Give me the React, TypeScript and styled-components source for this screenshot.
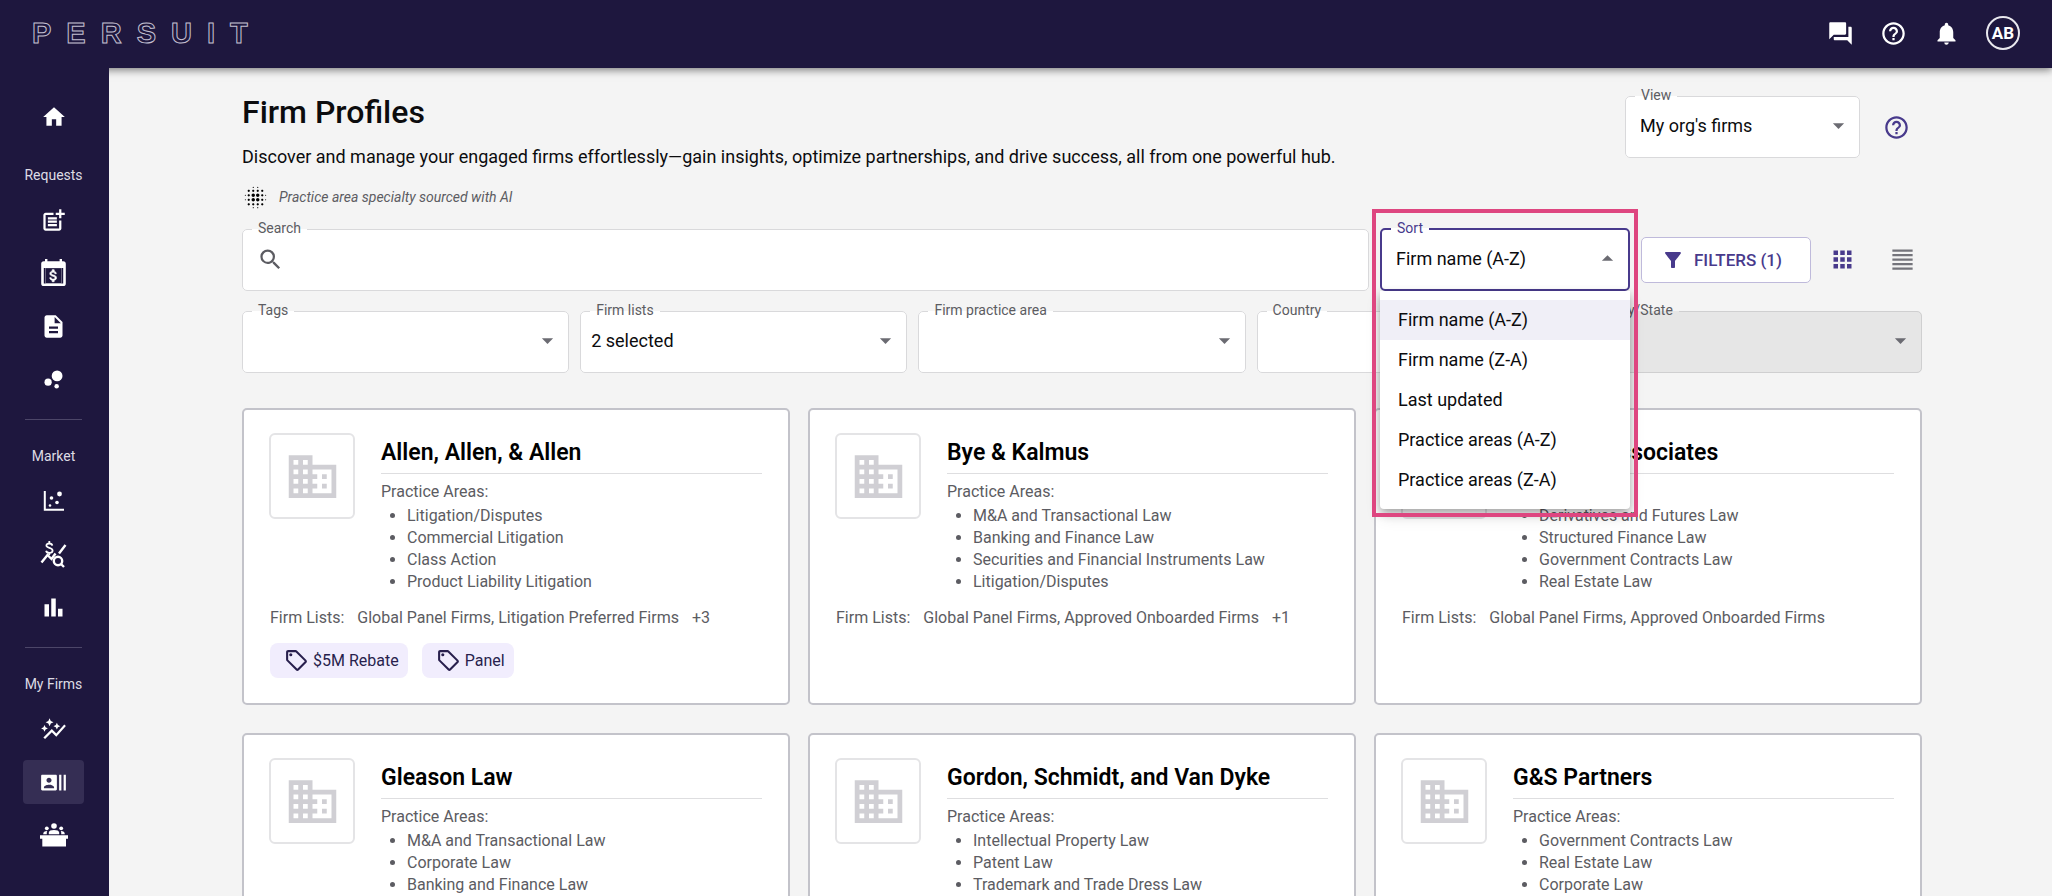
import React from 'react';
import styled, { createGlobalStyle, css } from 'styled-components';
import {
  MdApps,
  MdArrowDropDown,
  MdArrowDropUp,
  MdAttachMoney,
  MdAutoGraph,
  MdBarChart,
  MdBlurOn,
  MdBubbleChart,
  MdBusiness,
  MdDescription,
  MdFilterAlt,
  MdFormatAlignJustify,
  MdHelpOutline,
  MdHome,
  MdNotifications,
  MdOutlineSell,
  MdPostAdd,
  MdQuestionAnswer,
  MdRecentActors,
  MdSearch,
} from 'react-icons/md';

const color = {
  navy: '#1e173e',
  purple: '#483a8c',
  page: '#f4f4f4',
  text: '#0c0c0e',
  muted: '#5c5c62',
  line: '#d9d9db',
  cardLine: '#c3c3ca',
  pink: '#de4680',
};

const GlobalStyle = createGlobalStyle`
  *, *::before, *::after { box-sizing: border-box; }
  body {
    margin: 0;
    background: ${color.page};
    color: ${color.text};
    font-family: Roboto, "Liberation Sans", sans-serif;
    font-size: 18px;
  }
  button, input, select { font: inherit; color: inherit; }
`;

const Shell = styled.div`
  display: flex;
  flex-direction: column;
  height: 100vh;
  overflow: hidden;
`;

const TopBar = styled.header`
  display: flex;
  flex: none;
  align-items: center;
  justify-content: space-between;
  height: 68px;
  padding: 0 32px 2px;
  background: ${color.navy};
  box-shadow: 0 2px 8px rgba(0, 0, 0, 0.5);
  z-index: 1;
`;

const Logo = styled.a`
  display: flex;
  gap: 15px;
  font-family: "Liberation Sans", sans-serif;
  font-size: 29px;
  line-height: 32px;
  font-weight: 700;
  text-decoration: none;
  color: ${color.navy};
  -webkit-text-stroke: 1px #c4c0d2;
`;

const TopActions = styled.div`
  display: flex;
  align-items: center;
  gap: 26px;
  color: #fff;
`;

const IconButton = styled.button<{ $box?: number; $tone?: string }>`
  display: flex;
  align-items: center;
  justify-content: center;
  width: ${(p) => p.$box ?? 27}px;
  height: ${(p) => p.$box ?? 27}px;
  padding: 0;
  border: 0;
  background: none;
  color: ${(p) => p.$tone ?? 'inherit'};
  cursor: pointer;
`;

const Avatar = styled.button`
  width: 34px;
  height: 34px;
  padding: 0;
  border: 2px solid #e9e8ee;
  border-radius: 50%;
  background: none;
  color: #fff;
  font-size: 17px;
  line-height: 30px;
  font-weight: 700;
`;

const Body = styled.div`
  display: flex;
  flex: 1;
  min-height: 0;
`;

const SideNav = styled.nav`
  display: flex;
  flex: none;
  flex-direction: column;
  align-items: center;
  width: 109px;
  padding: 27px 2px 0 0;
  background: ${color.navy};
  color: #fff;
  z-index: 2;
`;

const NavGroup = styled.div`
  display: flex;
  flex-direction: column;
  align-items: center;
  gap: 9px;
`;

const NavLink = styled.a<{ $active?: boolean }>`
  display: flex;
  align-items: center;
  justify-content: center;
  width: 61px;
  height: 44px;
  border-radius: 4px;
  color: #fff;
  background: ${(p) => (p.$active ? '#352e54' : 'transparent')};
`;

const NavLabel = styled.div`
  margin: 26px 0 13px;
  font-size: 14px;
  line-height: 20px;
  color: #dddbe4;
`;

const NavRule = styled.hr`
  width: 57px;
  height: 1px;
  margin: 18px 0 0;
  border: 0;
  background: #4c4668;
`;

const Main = styled.main`
  flex: 1;
  min-width: 0;
  padding: 20px 130px 28px 133px;
  overflow-y: auto;
  scrollbar-width: none;
`;

const PageHead = styled.div`
  display: flex;
  justify-content: space-between;
  margin-bottom: 12px;
`;

const PageTitle = styled.h1`
  margin: 0 0 9px;
  font-size: 32px;
  line-height: 48px;
  font-weight: 500;
`;

const Lead = styled.p`
  margin: 0 0 16px;
  font-size: 18px;
  line-height: 24px;
`;

const AiNote = styled.div`
  display: flex;
  align-items: center;
  gap: 10px;
  height: 24px;
  font-size: 14px;
  line-height: 24px;
  font-style: italic;
  color: ${color.muted};

  svg { color: #000; }
`;

const ViewGroup = styled.div`
  display: flex;
  align-items: center;
  align-self: flex-start;
  gap: 16px;
  margin-right: 6px;

  > button { margin-top: 8px; }
`;

const FieldBox = styled.fieldset<{ $focused?: boolean; $disabled?: boolean; $width?: number }>`
  min-width: 0;
  width: ${(p) => (p.$width ? `${p.$width}px` : 'auto')};
  height: 70px;
  margin: 0;
  padding: 0;
  border: 1px solid ${color.line};
  border-radius: 5px;
  background: ${(p) => (p.$disabled ? '#e6e6e6' : '#fff')};
  ${(p) => p.$focused && css`border: 2px solid ${color.purple};`}
  ${(p) => p.$disabled && css`border-color: #cfcfd0;`}

  legend {
    height: 16px;
    margin-left: 9px;
    padding: 0 6px;
    font-size: 14px;
    line-height: 14px;
    color: ${(p) => (p.$focused ? color.purple : color.muted)};
  }
`;

const Control = styled.div`
  position: relative;
  height: 42px;

  > svg {
    position: absolute;
    top: 8px;
    right: 7px;
    color: #6b6b72;
    pointer-events: none;
  }
`;

const Select = styled.select<{ $inset: number }>`
  width: 100%;
  height: 42px;
  padding: 0 40px 0 ${(p) => p.$inset}px;
  border: 0;
  outline: 0;
  appearance: none;
  background: none;
  font-size: 18px;
  opacity: 1;
`;

const SearchControl = styled.div`
  display: flex;
  align-items: center;
  gap: 8px;
  height: 44px;
  padding: 0 14px;
  color: ${color.muted};
`;

const SearchInput = styled.input`
  flex: 1;
  min-width: 0;
  height: 32px;
  padding: 0;
  border: 0;
  outline: 0;
  background: none;
`;

const SearchRow = styled.div`
  display: grid;
  grid-template-columns: 1fr 250px auto;
  gap: 11px;
  margin-bottom: 12px;
`;

const SortWrap = styled.div`
  position: relative;
  z-index: 1;
`;

const Menu = styled.ul`
  position: absolute;
  top: 100%;
  left: 0;
  right: 0;
  margin: 0;
  padding: 9px 0;
  border-radius: 0 0 4px 4px;
  background: #fff;
  box-shadow: 0 4px 10px rgba(0, 0, 0, 0.3), 0 8px 16px rgba(0, 0, 0, 0.1);
  list-style: none;
`;

const MenuItem = styled.li<{ $selected: boolean }>`
  padding: 0 18px;
  font-size: 18px;
  line-height: 40px;
  background: ${(p) => (p.$selected ? '#f0eff7' : '#fff')};
`;

const Highlight = styled.div`
  position: absolute;
  top: -12px;
  left: -8px;
  right: -8px;
  height: 308px;
  border: 4px solid ${color.pink};
  pointer-events: none;
`;

const RowActions = styled.div`
  display: flex;
  align-items: center;
  padding-top: 7px;
`;

const FiltersButton = styled.button`
  display: flex;
  align-items: center;
  gap: 9px;
  width: 170px;
  height: 46px;
  margin-right: 11px;
  padding: 0 0 0 19px;
  border: 1px solid #bfbadb;
  border-radius: 5px;
  background: #fff;
  color: ${color.purple};
  font-size: 17px;
  font-weight: 500;
`;

const ViewToggle = styled.div`
  display: flex;
  gap: 20px;
`;

const FilterRow = styled.div`
  display: grid;
  grid-template-columns: repeat(5, 1fr);
  gap: 11px;
  margin-bottom: 35px;
`;

const CardGrid = styled.div`
  display: grid;
  grid-template-columns: repeat(3, 1fr);
  gap: 28px 18px;
`;

const Card = styled.article`
  min-height: 297px;
  padding: 23px 26px 22px 25px;
  border: 2px solid ${color.cardLine};
  border-radius: 5px;
  background: #fff;
  color: ${color.muted};
  font-size: 16px;
  line-height: 22px;
`;

const CardTop = styled.div`
  display: grid;
  grid-template-columns: 86px 1fr;
  column-gap: 26px;
`;

const FirmLogo = styled.div`
  display: flex;
  align-items: center;
  justify-content: center;
  height: 86px;
  border: 2px solid #e4e4e6;
  border-radius: 6px;
  color: #d0cfd4;
`;

const FirmName = styled.h2`
  margin: 0 0 7px;
  padding: 5px 0 5px;
  border-bottom: 1px solid #dedee0;
  color: #000;
  font-size: 23px;
  line-height: 30px;
  font-weight: 600;
  white-space: nowrap;
`;

const AreaList = styled.ul`
  margin: 2px 0 0;
  padding-left: 26px;
`;

const FirmLists = styled.div`
  display: flex;
  gap: 13px;
  margin-top: 14px;
  padding-left: 1px;
`;

const Chips = styled.div`
  display: flex;
  gap: 14px;
  margin-top: 14px;
  padding-left: 1px;
`;

const Chip = styled.span`
  display: flex;
  align-items: center;
  gap: 4px;
  height: 35px;
  padding: 0 9px 0 14px;
  border-radius: 8px;
  background: #f1edfd;
  color: #281f4d;
`;

const CalendarMoneyIcon = () => (
  <svg width="27" height="28" viewBox="0 0 27 28" fill="currentColor" aria-hidden="true">
    <path
      fillRule="evenodd"
      d="M5 0h2.400v2.200h12.200V0H22v2.200h1.200A2.600 2.600 0 0 1 25.800 4.800v19.600a2.600 2.600 0 0 1-2.600 2.600H3.800a2.600 2.600 0 0 1-2.600-2.600V4.800A2.600 2.600 0 0 1 3.800 2.200H5zM3.800 9v15.400h19.400V9z"
    />
    <MdAttachMoney x="5.500" y="8.700" size={16} stroke="currentColor" strokeWidth="1" />
  </svg>
);

const ScatterAxesIcon = () => (
  <svg width="24" height="24" viewBox="0 0 24 24" fill="currentColor" aria-hidden="true">
    <path d="M2.800 2v18.800H22" fill="none" stroke="currentColor" strokeWidth="2" />
    <circle cx="17.500" cy="5" r="2.400" />
    <circle cx="9.500" cy="9" r="1.800" />
    <circle cx="15" cy="13.500" r="1.800" />
    <circle cx="8" cy="16.500" r="1.300" />
  </svg>
);

const RateAnalysisIcon = () => (
  <svg width="27" height="28" viewBox="0 0 27 28" fill="none" stroke="currentColor" strokeWidth="2.400" aria-hidden="true">
    <circle cx="18" cy="21" r="4.200" />
    <path d="M21 24l3 3M19 13.500l6.500-8.500M1.500 22.500l6-7.500 4 4 4-5.500" />
    <path
      d="M12.300 5.600C12 4.200 10.900 3.500 9.300 3.500 7.600 3.500 6.400 4.300 6.400 5.600c0 3 6.200 1.600 6.200 5 0 1.500-1.300 2.400-3.200 2.400-1.800 0-3-.7-3.300-2.200M9.300 1v2.500M9.300 13v2"
      strokeWidth="1.800"
    />
  </svg>
);

const PanelDeskIcon = () => (
  <svg width="28" height="24" viewBox="0 0 28 24" fill="currentColor" aria-hidden="true">
    <circle cx="14" cy="3" r="2.800" />
    <circle cx="6.800" cy="5.300" r="1.900" />
    <circle cx="21.200" cy="5.300" r="1.900" />
    <path d="M8.800 11.200V9.600C8.800 7.800 11.200 7 14 7s5.200.8 5.200 2.600v1.600zM3.200 11.200c0-2 1.400-3 4-3.100-.5 1-.5 2-.4 3.100zM24.800 11.200c0-2-1.400-3-4-3.100.5 1 .5 2 .4 3.100z" />
    <path d="M0 12.300h28v3.400h-2V23.500H2.300v-7.800H0z" />
  </svg>
);

type FieldProps = {
  id: string;
  label: string;
  value?: string;
  inset?: number;
  width?: number;
  disabled?: boolean;
  focused?: boolean;
  options?: string[];
};

const SelectField = ({ id, label, value = '', inset = 10, width, disabled, focused, options }: FieldProps) => (
  <FieldBox $width={width} $disabled={disabled} $focused={focused}>
    <legend>
      <label htmlFor={id}>{label}</label>
    </legend>
    <Control>
      <Select id={id} $inset={inset} disabled={disabled} defaultValue={value}>
        {(options ?? [value]).map((o) => (
          <option key={o} value={o}>
            {o}
          </option>
        ))}
      </Select>
      {focused ? <MdArrowDropUp size={27} /> : <MdArrowDropDown size={27} />}
    </Control>
  </FieldBox>
);

const sortOptions = [
  'Firm name (A-Z)',
  'Firm name (Z-A)',
  'Last updated',
  'Practice areas (A-Z)',
  'Practice areas (Z-A)',
];

type Firm = { name: string; areas: string[]; lists?: string; more?: string; tags?: string[] };

const firms: Firm[] = [
  {
    name: 'Allen, Allen, & Allen',
    areas: ['Litigation/Disputes', 'Commercial Litigation', 'Class Action', 'Product Liability Litigation'],
    lists: 'Global Panel Firms, Litigation Preferred Firms',
    more: '+3',
    tags: ['$5M Rebate', 'Panel'],
  },
  {
    name: 'Bye & Kalmus',
    areas: [
      'M&A and Transactional Law',
      'Banking and Finance Law',
      'Securities and Financial Instruments Law',
      'Litigation/Disputes',
    ],
    lists: 'Global Panel Firms, Approved Onboarded Firms',
    more: '+1',
  },
  {
    name: 'Carter & Associates',
    areas: ['Derivatives and Futures Law', 'Structured Finance Law', 'Government Contracts Law', 'Real Estate Law'],
    lists: 'Global Panel Firms, Approved Onboarded Firms',
  },
  { name: 'Gleason Law', areas: ['M&A and Transactional Law', 'Corporate Law', 'Banking and Finance Law'] },
  {
    name: 'Gordon, Schmidt, and Van Dyke',
    areas: ['Intellectual Property Law', 'Patent Law', 'Trademark and Trade Dress Law'],
  },
  { name: 'G&S Partners', areas: ['Government Contracts Law', 'Real Estate Law', 'Corporate Law'] },
];

const FirmCard = ({ firm }: { firm: Firm }) => (
  <Card>
    <CardTop>
      <FirmLogo>
        <MdBusiness size={57} />
      </FirmLogo>
      <div>
        <FirmName>{firm.name}</FirmName>
        <div>Practice Areas:</div>
        <AreaList>
          {firm.areas.map((a) => (
            <li key={a}>{a}</li>
          ))}
        </AreaList>
      </div>
    </CardTop>
    {firm.lists && (
      <FirmLists>
        <span>Firm Lists:</span>
        <span>{firm.lists}</span>
        {firm.more && <span>{firm.more}</span>}
      </FirmLists>
    )}
    {firm.tags && (
      <Chips>
        {firm.tags.map((t) => (
          <Chip key={t}>
            <MdOutlineSell size={25} />
            {t}
          </Chip>
        ))}
      </Chips>
    )}
  </Card>
);

export default function App() {
  return (
    <Shell>
      <GlobalStyle />
      <TopBar>
        <Logo href="#" aria-label="Persuit">
          {'PERSUIT'.split('').map((c, i) => (
            <span key={i}>{c}</span>
          ))}
        </Logo>
        <TopActions>
          <IconButton aria-label="Messages"><MdQuestionAnswer size={27} /></IconButton>
          <IconButton aria-label="Help"><MdHelpOutline size={27} /></IconButton>
          <IconButton aria-label="Notifications"><MdNotifications size={27} /></IconButton>
          <Avatar>AB</Avatar>
        </TopActions>
      </TopBar>
      <Body>
        <SideNav>
          <NavGroup>
            <NavLink href="#" aria-label="Home"><MdHome size={26} /></NavLink>
          </NavGroup>
          <NavLabel>Requests</NavLabel>
          <NavGroup>
            <NavLink href="#" aria-label="New request"><MdPostAdd size={27} /></NavLink>
            <NavLink href="#" aria-label="Billing calendar"><CalendarMoneyIcon /></NavLink>
            <NavLink href="#" aria-label="Documents"><MdDescription size={27} /></NavLink>
            <NavLink href="#" aria-label="Bubbles"><MdBubbleChart size={27} /></NavLink>
          </NavGroup>
          <NavRule />
          <NavLabel>Market</NavLabel>
          <NavGroup>
            <NavLink href="#" aria-label="Scatter"><ScatterAxesIcon /></NavLink>
            <NavLink href="#" aria-label="Rate analysis"><RateAnalysisIcon /></NavLink>
            <NavLink href="#" aria-label="Benchmarks"><MdBarChart size={27} /></NavLink>
          </NavGroup>
          <NavRule />
          <NavLabel>My Firms</NavLabel>
          <NavGroup>
            <NavLink href="#" aria-label="Insights"><MdAutoGraph size={27} /></NavLink>
            <NavLink href="#" aria-label="Firm profiles" $active><MdRecentActors size={27} /></NavLink>
            <NavLink href="#" aria-label="Panels"><PanelDeskIcon /></NavLink>
          </NavGroup>
        </SideNav>
        <Main>
          <PageHead>
            <div>
              <PageTitle>Firm Profiles</PageTitle>
              <Lead>
                Discover and manage your engaged firms effortlessly—gain insights, optimize partnerships, and drive
                success, all from one powerful hub.
              </Lead>
              <AiNote>
                <MdBlurOn size={27} />
                Practice area specialty sourced with AI
              </AiNote>
            </div>
            <ViewGroup>
              <SelectField id="view" label="View" value="My org's firms" inset={14} width={235} />
              <IconButton aria-label="About views" $box={40} $tone={color.purple}>
                <MdHelpOutline size={27} />
              </IconButton>
            </ViewGroup>
          </PageHead>

          <SearchRow>
            <FieldBox>
              <legend>
                <label htmlFor="search">Search</label>
              </legend>
              <SearchControl>
                <MdSearch size={27} />
                <SearchInput id="search" type="text" />
              </SearchControl>
            </FieldBox>
            <SortWrap>
              <SelectField id="sort" label="Sort" value={sortOptions[0]} options={sortOptions} inset={14} focused />
              <Menu role="listbox" aria-label="Sort">
                {sortOptions.map((o, i) => (
                  <MenuItem key={o} role="option" aria-selected={i === 0} $selected={i === 0}>
                    {o}
                  </MenuItem>
                ))}
              </Menu>
              <Highlight />
            </SortWrap>
            <RowActions>
              <FiltersButton>
                <MdFilterAlt size={24} />
                FILTERS (1)
              </FiltersButton>
              <ViewToggle>
                <IconButton aria-label="Grid view" $box={40} $tone={color.purple}>
                  <MdApps size={27} />
                </IconButton>
                <IconButton aria-label="List view" $box={40} $tone="#74747b">
                  <MdFormatAlignJustify size={27} />
                </IconButton>
              </ViewToggle>
            </RowActions>
          </SearchRow>

          <FilterRow>
            <SelectField id="tags" label="Tags" />
            <SelectField id="lists" label="Firm lists" value="2 selected" />
            <SelectField id="area" label="Firm practice area" />
            <SelectField id="country" label="Country" />
            <SelectField id="city" label="City/State" disabled />
          </FilterRow>

          <CardGrid>
            {firms.map((f) => (
              <FirmCard key={f.name} firm={f} />
            ))}
          </CardGrid>
        </Main>
      </Body>
    </Shell>
  );
}
